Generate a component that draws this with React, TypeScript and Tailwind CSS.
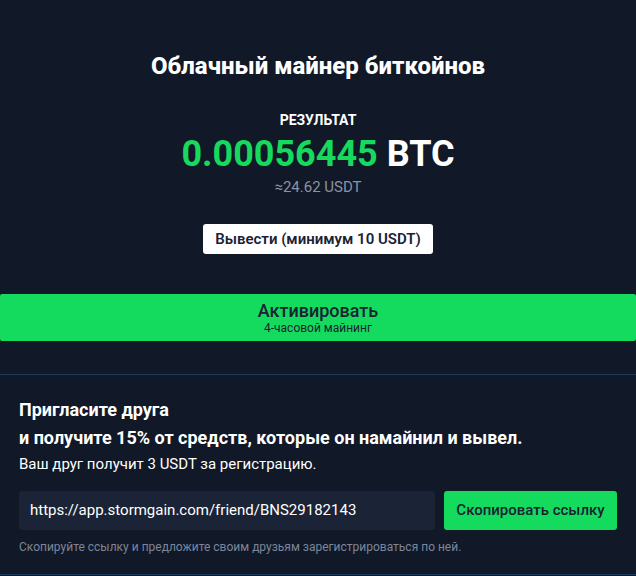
export default function App() {
  return (
    <div className="w-[636px] h-[576px] bg-[#111827] text-white overflow-hidden" style={{ fontFamily: 'Roboto, "Noto Sans", sans-serif' }}>
      {/* Miner */}
      <div className="flex flex-col items-center pt-[50px]">
        <h1 className="text-[24px] leading-[32px] font-extrabold">Облачный майнер биткойнов</h1>
        <div className="mt-[30px] text-[14px] leading-[16px] font-bold">РЕЗУЛЬТАТ</div>
        <div className="mt-[6px] text-[36px] leading-[40px] font-bold">
          <span className="text-[#16d95e]">0.00056445</span> BTC
        </div>
        <div className="mt-[4px] text-[15px] leading-[18px] text-[#8a93a6]">≈24.62 USDT</div>
        <button className="mt-[28px] h-[30px] px-[12px] rounded-[3px] bg-white text-[#1a2233] text-[15px] font-semibold">
          Вывести (минимум 10 USDT)
        </button>
      </div>

      <button className="mt-[40px] w-full h-[47px] bg-[#14db5e] rounded-[2px] flex flex-col items-center justify-center text-[#1a2233]">
        <span className="text-[18px] leading-[21px] font-medium">Активировать</span>
        <span className="text-[12px] leading-[14px]">4-часовой майнинг</span>
      </button>

      {/* Invite */}
      <div className="mt-[33px] border-y border-[#1c3a5c] px-[19px] pt-[21px] pb-[20px]">
        <div className="text-[18px] leading-[28px] font-bold">Пригласите друга</div>
        <div className="text-[18px] leading-[28px] font-bold">и получите 15% от средств, которые он намайнил и вывел.</div>
        <div className="mt-[2px] text-[15px] leading-[20px]">Ваш друг получит 3 USDT за регистрацию.</div>
        <div className="mt-[17px] flex gap-[9px]">
          <div className="w-[416px] h-[39px] rounded-[3px] bg-[#1a2436] flex items-center px-[11px] text-[15px]">
            https://app.stormgain.com/friend/BNS29182143
          </div>
          <button className="w-[173px] h-[39px] rounded-[3px] bg-[#14db5e] text-[#1a2233] text-[15px] font-medium">
            Скопировать ссылку
          </button>
        </div>
        <div className="mt-[10px] text-[12px] leading-[14px] text-[#7c869a]">
          Скопируйте ссылку и предложите своим друзьям зарегистрироваться по ней.
        </div>
      </div>
    </div>
  )
}
